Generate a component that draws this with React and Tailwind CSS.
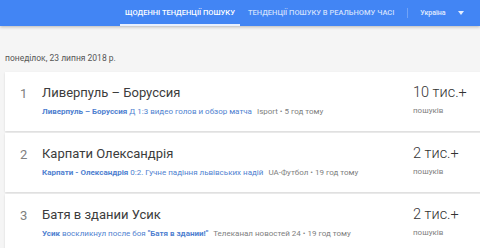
import React from "react";

const rows = [
  {
    n: 1,
    title: "Ливерпуль – Боруссия",
    bold: "Ливерпуль – Боруссия",
    rest: " Д 1:3 видео голов и обзор матча",
    src: "Isport • 5 год тому",
    count: "10 тис.+",
  },
  {
    n: 2,
    title: "Карпати Олександрія",
    bold: "Карпати - Олександрія",
    rest: " 0:2. Гучне падіння львівських надій",
    src: "UA-Футбол • 19 год тому",
    count: "2 тис.+",
  },
  {
    n: 3,
    title: "Батя в здании Усик",
    bold: "Усик",
    rest: " воскликнул после боя ",
    bold2: "\"Батя в здании!\"",
    src: "Телеканал новостей 24 • 19 год тому",
    count: "2 тис.+",
  },
];

const Row = ({ r }) => (
  <div className="flex h-[59px] bg-white pl-[15px] shadow-[0_1px_2px_rgba(0,0,0,0.12)]">
    <div className="w-[22px] pt-[14px] text-[13px] leading-[16px] text-[#808080]">{r.n}</div>
    <div className="w-[371px] pt-[13px]">
      <div className="text-[13px] leading-[16px] text-[#3c3c3c]">{r.title}</div>
      <div className="mt-[5px] whitespace-nowrap text-[8px] leading-[12px]">
        <span className="font-bold text-[#4f7fd0]">{r.bold}</span>
        <span className="text-[#4f7fd0]">{r.rest}</span>
        {r.bold2 && <span className="font-bold text-[#4f7fd0]">{r.bold2}</span>}
        <span className="ml-[5px] text-[#808080]">{r.src}</span>
      </div>
    </div>
    <div className="pt-[12px]">
      <div className="text-[14.5px] font-light leading-[18px] text-[#333]">{r.count}</div>
      <div className="mt-[3px] text-[8px] leading-[12px] text-[#808080]">пошуків</div>
    </div>
  </div>
);

export default function App() {
  return (
    <div className="h-[248px] w-[480px] overflow-hidden bg-[#f5f5f5] font-['Roboto',sans-serif]">
      <div className="flex h-[26px] items-stretch bg-[#4285f4] shadow-[0_1px_3px_rgba(0,0,0,0.25)]">
        <div className="w-[120px]" />
        <div className="flex w-[120px] items-center justify-center border-b-[2px] border-[#e8f0fe] pt-[2px] text-[7.5px] font-medium uppercase text-white">
          Щоденні тенденції пошуку
        </div>
        <div className="flex items-center pl-[8px] text-[7.5px] font-medium uppercase text-white/75">
          Тенденції пошуку в реальному часі
        </div>
        <div className="ml-[13px] my-[8px] w-px bg-white/25" />
        <div className="ml-[12px] flex items-center text-[7px] font-medium text-white/85">
          Україна
          <svg width="6" height="4" viewBox="0 0 6 4" className="ml-[12px]">
            <path d="M0 0h6L3 4z" fill="rgba(255,255,255,0.85)" />
          </svg>
        </div>
      </div>
      <div className="pl-[5px] pt-[26px] text-[8.5px] leading-[12px] text-[#555]">
        понеділок, 23 липня 2018 р.
      </div>
      <div className="ml-[5px] mt-[8px] flex w-[480px] flex-col gap-[2px]">
        {rows.map((r) => (
          <Row key={r.n} r={r} />
        ))}
      </div>
    </div>
  );
}
